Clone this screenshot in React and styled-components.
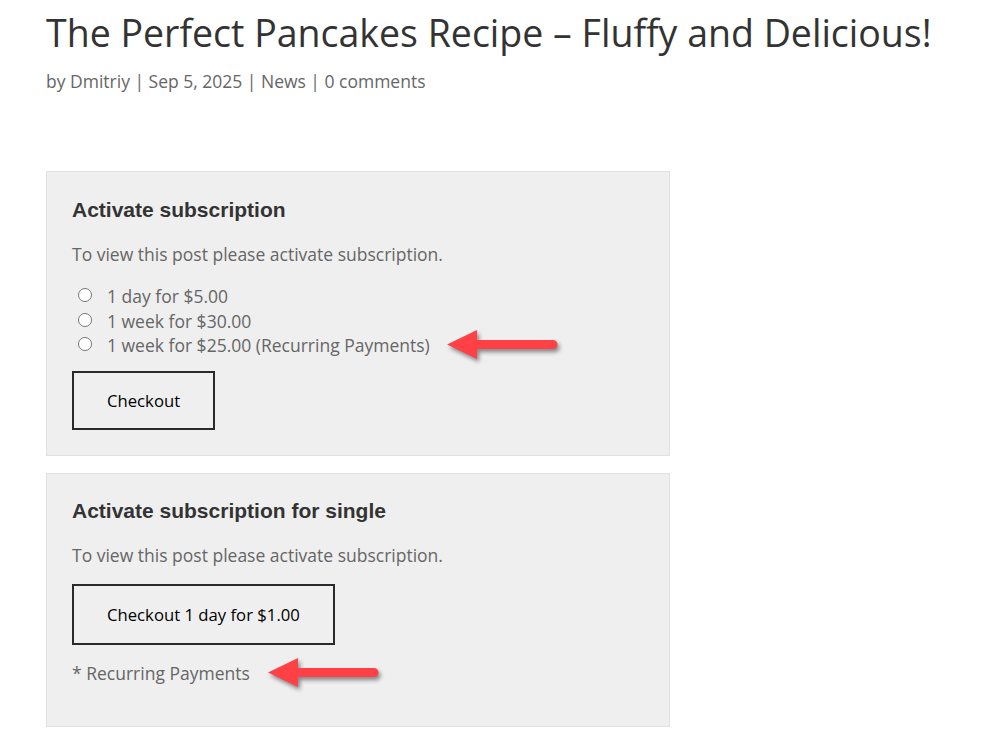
import React from "react";
import styled, { createGlobalStyle } from "styled-components";

const Global = createGlobalStyle`
  html, body { margin: 0; padding: 0; background: #fff; }
  body { font-family: "Open Sans", "Liberation Sans", sans-serif; color: #666; }
`;

const Page = styled.div`
  padding: 9px 46px 0;
`;

const Title = styled.h1`
  margin: 0;
  font-family: "Open Sans", sans-serif;
  font-weight: 400;
  font-size: 37.5px;
  line-height: 47px;
  color: #333;
  white-space: nowrap;
`;

const Meta = styled.p`
  margin: 12px 0 0;
  font-size: 17.5px;
  line-height: 27px;
  color: #666;
`;

const Sep = styled.span`
  margin: 0 4.5px;
`;

const Box = styled.section`
  width: 624px;
  box-sizing: border-box;
  margin-top: ${(p) => p.$top}px;
  padding: ${(p) => p.$pt}px 25px ${(p) => p.$bottom}px;
  background: #efefef;
  border: 1px solid #e2e2e2;
`;

const Heading = styled.h3`
  margin: 0;
  font-family: "Liberation Sans", Arial, sans-serif;
  font-weight: 700;
  font-size: 21px;
  line-height: 26px;
  color: #333;
`;

const Text = styled.p`
  margin: ${(p) => p.$mt}px 0 0;
  font-size: 17.5px;
  line-height: 30px;
  color: #666;
  display: flex;
  align-items: center;
`;

const Options = styled.div`
  margin-top: 15px;
  display: flex;
  flex-direction: column;
`;

const Option = styled.label`
  display: flex;
  align-items: center;
  height: 24.5px;
  font-size: 17.5px;
  color: #666;
`;

const Radio = styled.input.attrs({ type: "radio" })`
  appearance: none;
  box-sizing: border-box;
  width: 14px;
  height: 14px;
  margin: 0 15px 0 6px;
  border: 1px solid #767676;
  border-radius: 50%;
  background: #fff;
  position: relative;
  top: -1px;
`;

const Button = styled.button`
  display: block;
  margin-top: ${(p) => p.$mt}px;
  height: ${(p) => p.$h}px;
  padding: 0 33px;
  background: transparent;
  border: 2px solid #2a2a2a;
  border-radius: 0;
  font-family: "Open Sans", sans-serif;
  font-size: 16.7px;
  color: #000;
`;

const ArrowSvg = styled.svg`
  display: block;
  margin-left: ${(p) => p.$ml}px;
  margin-top: -6px;
  margin-bottom: -6px;
  overflow: visible;
  filter: drop-shadow(2px 3px 2px rgba(0, 0, 0, 0.45));
`;

const Arrow = ({ ml }) => (
  <ArrowSvg $ml={ml} width="112" height="32" viewBox="0 0 112 32">
    <path d="M0 15.5 L30 1 L30 11 L106 11 A4.5 4.5 0 0 1 106 20 L30 20 L30 30 Z" fill="#ff4145" />
  </ArrowSvg>
);

export default function App() {
  return (
    <>
      <Global />
      <Page>
        <Title>The Perfect Pancakes Recipe – Fluffy and Delicious!</Title>
        <Meta>
          by Dmitriy<Sep>|</Sep>Sep 5, 2025<Sep>|</Sep>News<Sep>|</Sep>0 comments
        </Meta>
        <Box $top={76} $pt={25} $bottom={25}>
          <Heading>Activate subscription</Heading>
          <Text $mt={16}>To view this post please activate subscription.</Text>
          <Options>
            <Option>
              <Radio name="plan" />1 day for $5.00
            </Option>
            <Option>
              <Radio name="plan" />1 week for $30.00
            </Option>
            <Option>
              <Radio name="plan" />1 week for $25.00 (Recurring Payments)
              <Arrow ml={17} />
            </Option>
          </Options>
          <Button $mt={13} $h={59}>Checkout</Button>
        </Box>
        <Box $top={17} $pt={24} $bottom={38}>
          <Heading>Activate subscription for single</Heading>
          <Text $mt={16}>To view this post please activate subscription.</Text>
          <Button $mt={14} $h={61}>Checkout 1 day for $1.00</Button>
          <Text $mt={13}>
            * Recurring Payments
            <Arrow ml={18} />
          </Text>
        </Box>
      </Page>
    </>
  );
}
